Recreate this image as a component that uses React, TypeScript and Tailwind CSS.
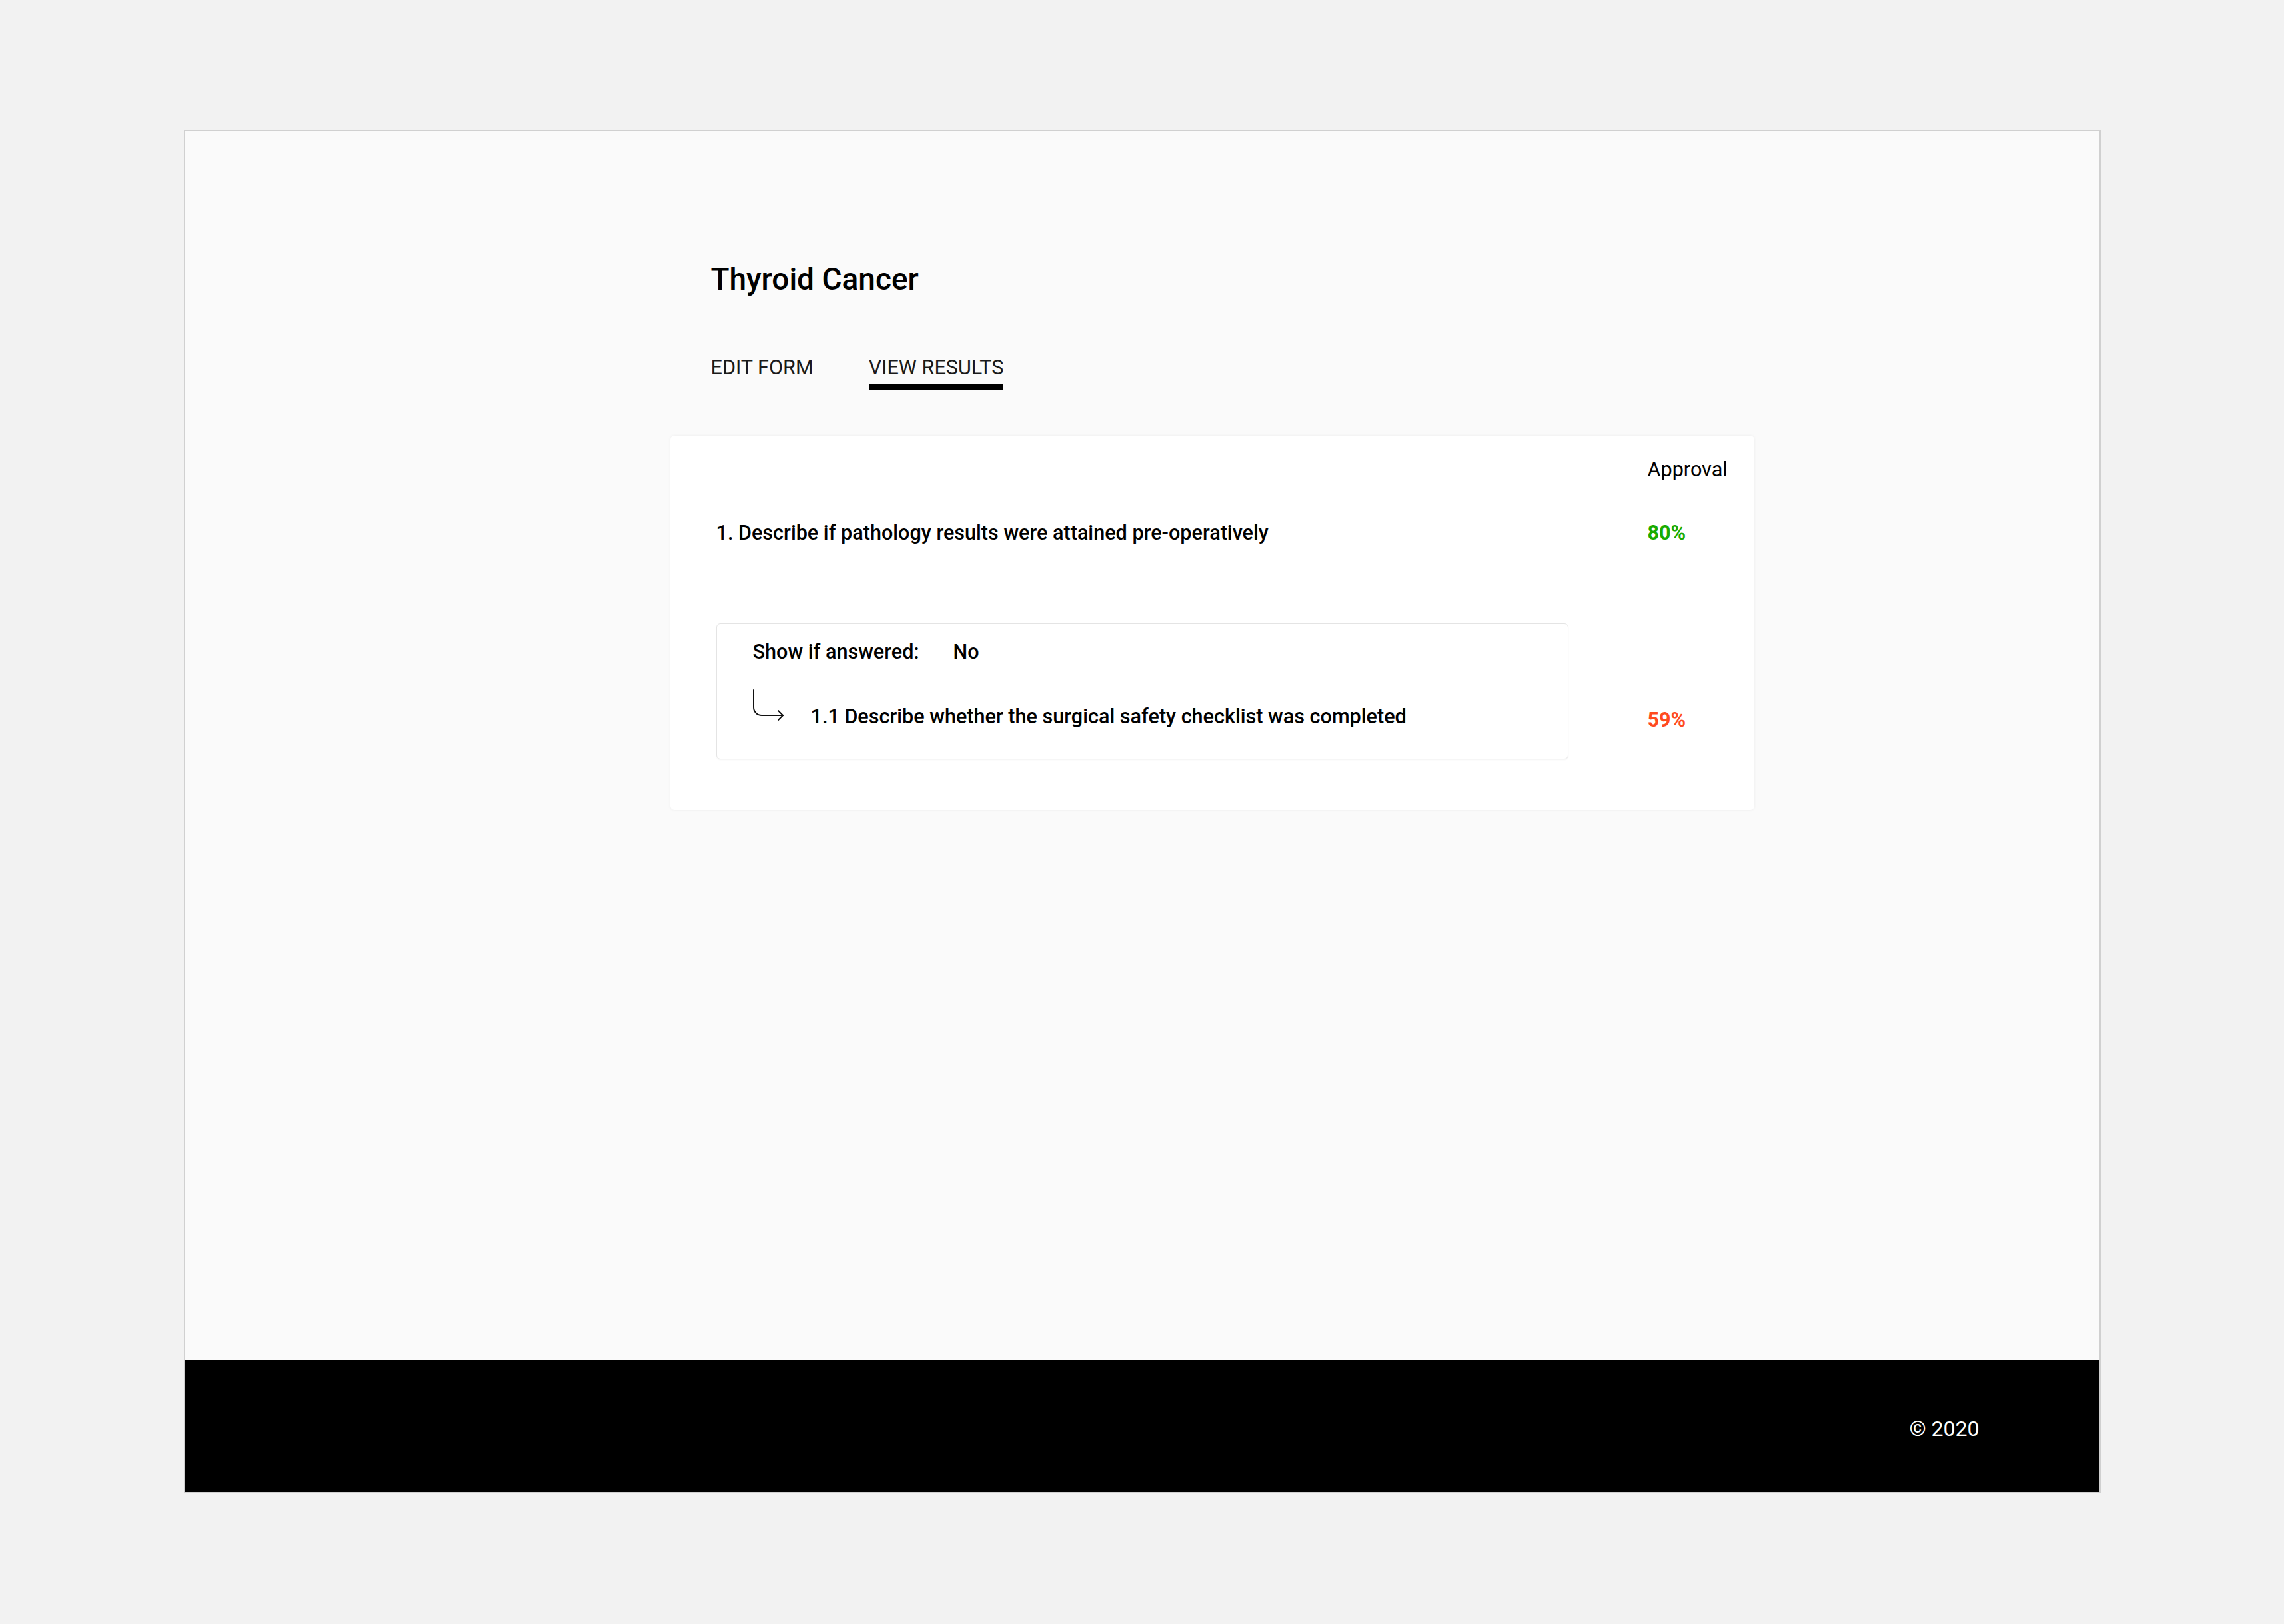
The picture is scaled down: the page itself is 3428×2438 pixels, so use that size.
import React, { useState } from 'react';

type Tab = 'edit' | 'results';

interface SubQuestion {
    condition: string;
    label: string;
    approval: number;
}

interface Question {
    label: string;
    approval: number;
    children: SubQuestion[];
}

const questions: Question[] = [
    {
        label: '1. Describe if pathology results were attained pre-operatively',
        approval: 80,
        children: [
            {
                condition: 'No',
                label: '1.1 Describe whether the surgical safety checklist was completed',
                approval: 59,
            },
        ],
    },
];

function BranchArrow() {
    return (
        <svg width="48" height="48" viewBox="0 0 48 48" fill="none" stroke="#111" strokeWidth="2" strokeLinecap="round" strokeLinejoin="round" className="shrink-0">
            <path d="M2 1v26a12 12 0 0 0 12 12h32" />
            <polyline points="39 32 46 39 39 46" />
        </svg>
    );
}

function Percent({ value }: { value: number }) {
    return (
        <span className={value >= 70 ? 'text-[#19ab00] font-bold' : 'text-[#ff4b1f] font-bold'}>
            {value}%
        </span>
    );
}

export default function App() {
    const [tab, setTab] = useState<Tab>('results');

    return (
        <div className="min-h-screen bg-[#f2f2f2] pt-[195px] font-['Roboto',sans-serif] text-black">
            <div className="mx-auto w-[2877px] h-[2047px] border-2 border-[#d0d0d0] bg-[#fafafa] flex flex-col">
                <main className="flex-1 pt-[199px] pl-[728px]">
                    <div className="pl-[61px]">
                        <h1 className="text-[46px] leading-[46px] font-medium">Thyroid Cancer</h1>
                        <div className="flex gap-[83px] mt-[95px]">
                            <button
                                onClick={() => setTab('edit')}
                                className={`text-[30.6px] leading-none pb-[9px] border-b-[8px] text-[#1a1a1a] ${tab === 'edit' ? 'border-black' : 'border-transparent'}`}
                            >
                                EDIT FORM
                            </button>
                            <button
                                onClick={() => setTab('results')}
                                className={`text-[30.6px] leading-none pb-[9px] border-b-[8px] text-[#1a1a1a] ${tab === 'results' ? 'border-black' : 'border-transparent'}`}
                            >
                                VIEW RESULTS
                            </button>
                        </div>
                    </div>

                    <div className="mt-[69px] w-[1627px] h-[562px] bg-white rounded-[6px] shadow-[0_0_4px_rgba(0,0,0,0.06)] pt-[36px] pl-[69px]">
                        <div className="flex">
                            <div className="w-[1398px]" />
                            <div className="text-[30.6px] leading-none">Approval</div>
                        </div>

                        {questions.map((q, i) => (
                            <div key={i}>
                                <div className="flex items-baseline mt-[65px]">
                                    <div className="w-[1398px] text-[30.6px] leading-none font-medium">{q.label}</div>
                                    <div className="text-[30.6px] leading-none">
                                        <Percent value={q.approval} />
                                    </div>
                                </div>

                                {q.children.map((sub, j) => (
                                    <div key={j} className="flex mt-[120px]">
                                        <div className="w-[1398px]">
                                            <div className="w-[1279px] h-[204px] border border-[#e4e4e4] rounded-[6px] shadow-[0_1px_2px_rgba(0,0,0,0.05)] pt-[27px] pl-[54px]">
                                                <div className="flex text-[30.6px] leading-none font-medium">
                                                    <span className="w-[301px]">Show if answered:</span>
                                                    <span>{sub.condition}</span>
                                                </div>
                                                <div className="flex items-start mt-[41px] -ml-[1px]">
                                                    <BranchArrow />
                                                    <div className="ml-[40px] mt-[26px] text-[30.6px] leading-none font-medium">{sub.label}</div>
                                                </div>
                                            </div>
                                        </div>
                                        <div className="mt-[130px] text-[30.6px] leading-none">
                                            <Percent value={sub.approval} />
                                        </div>
                                    </div>
                                ))}
                            </div>
                        ))}
                    </div>
                </main>

                <footer className="h-[198px] bg-black flex items-center justify-end pr-[180px]">
                    <span className="text-white text-[32px] leading-none mt-[8px]">© 2020</span>
                </footer>
            </div>
        </div>
    );
}
